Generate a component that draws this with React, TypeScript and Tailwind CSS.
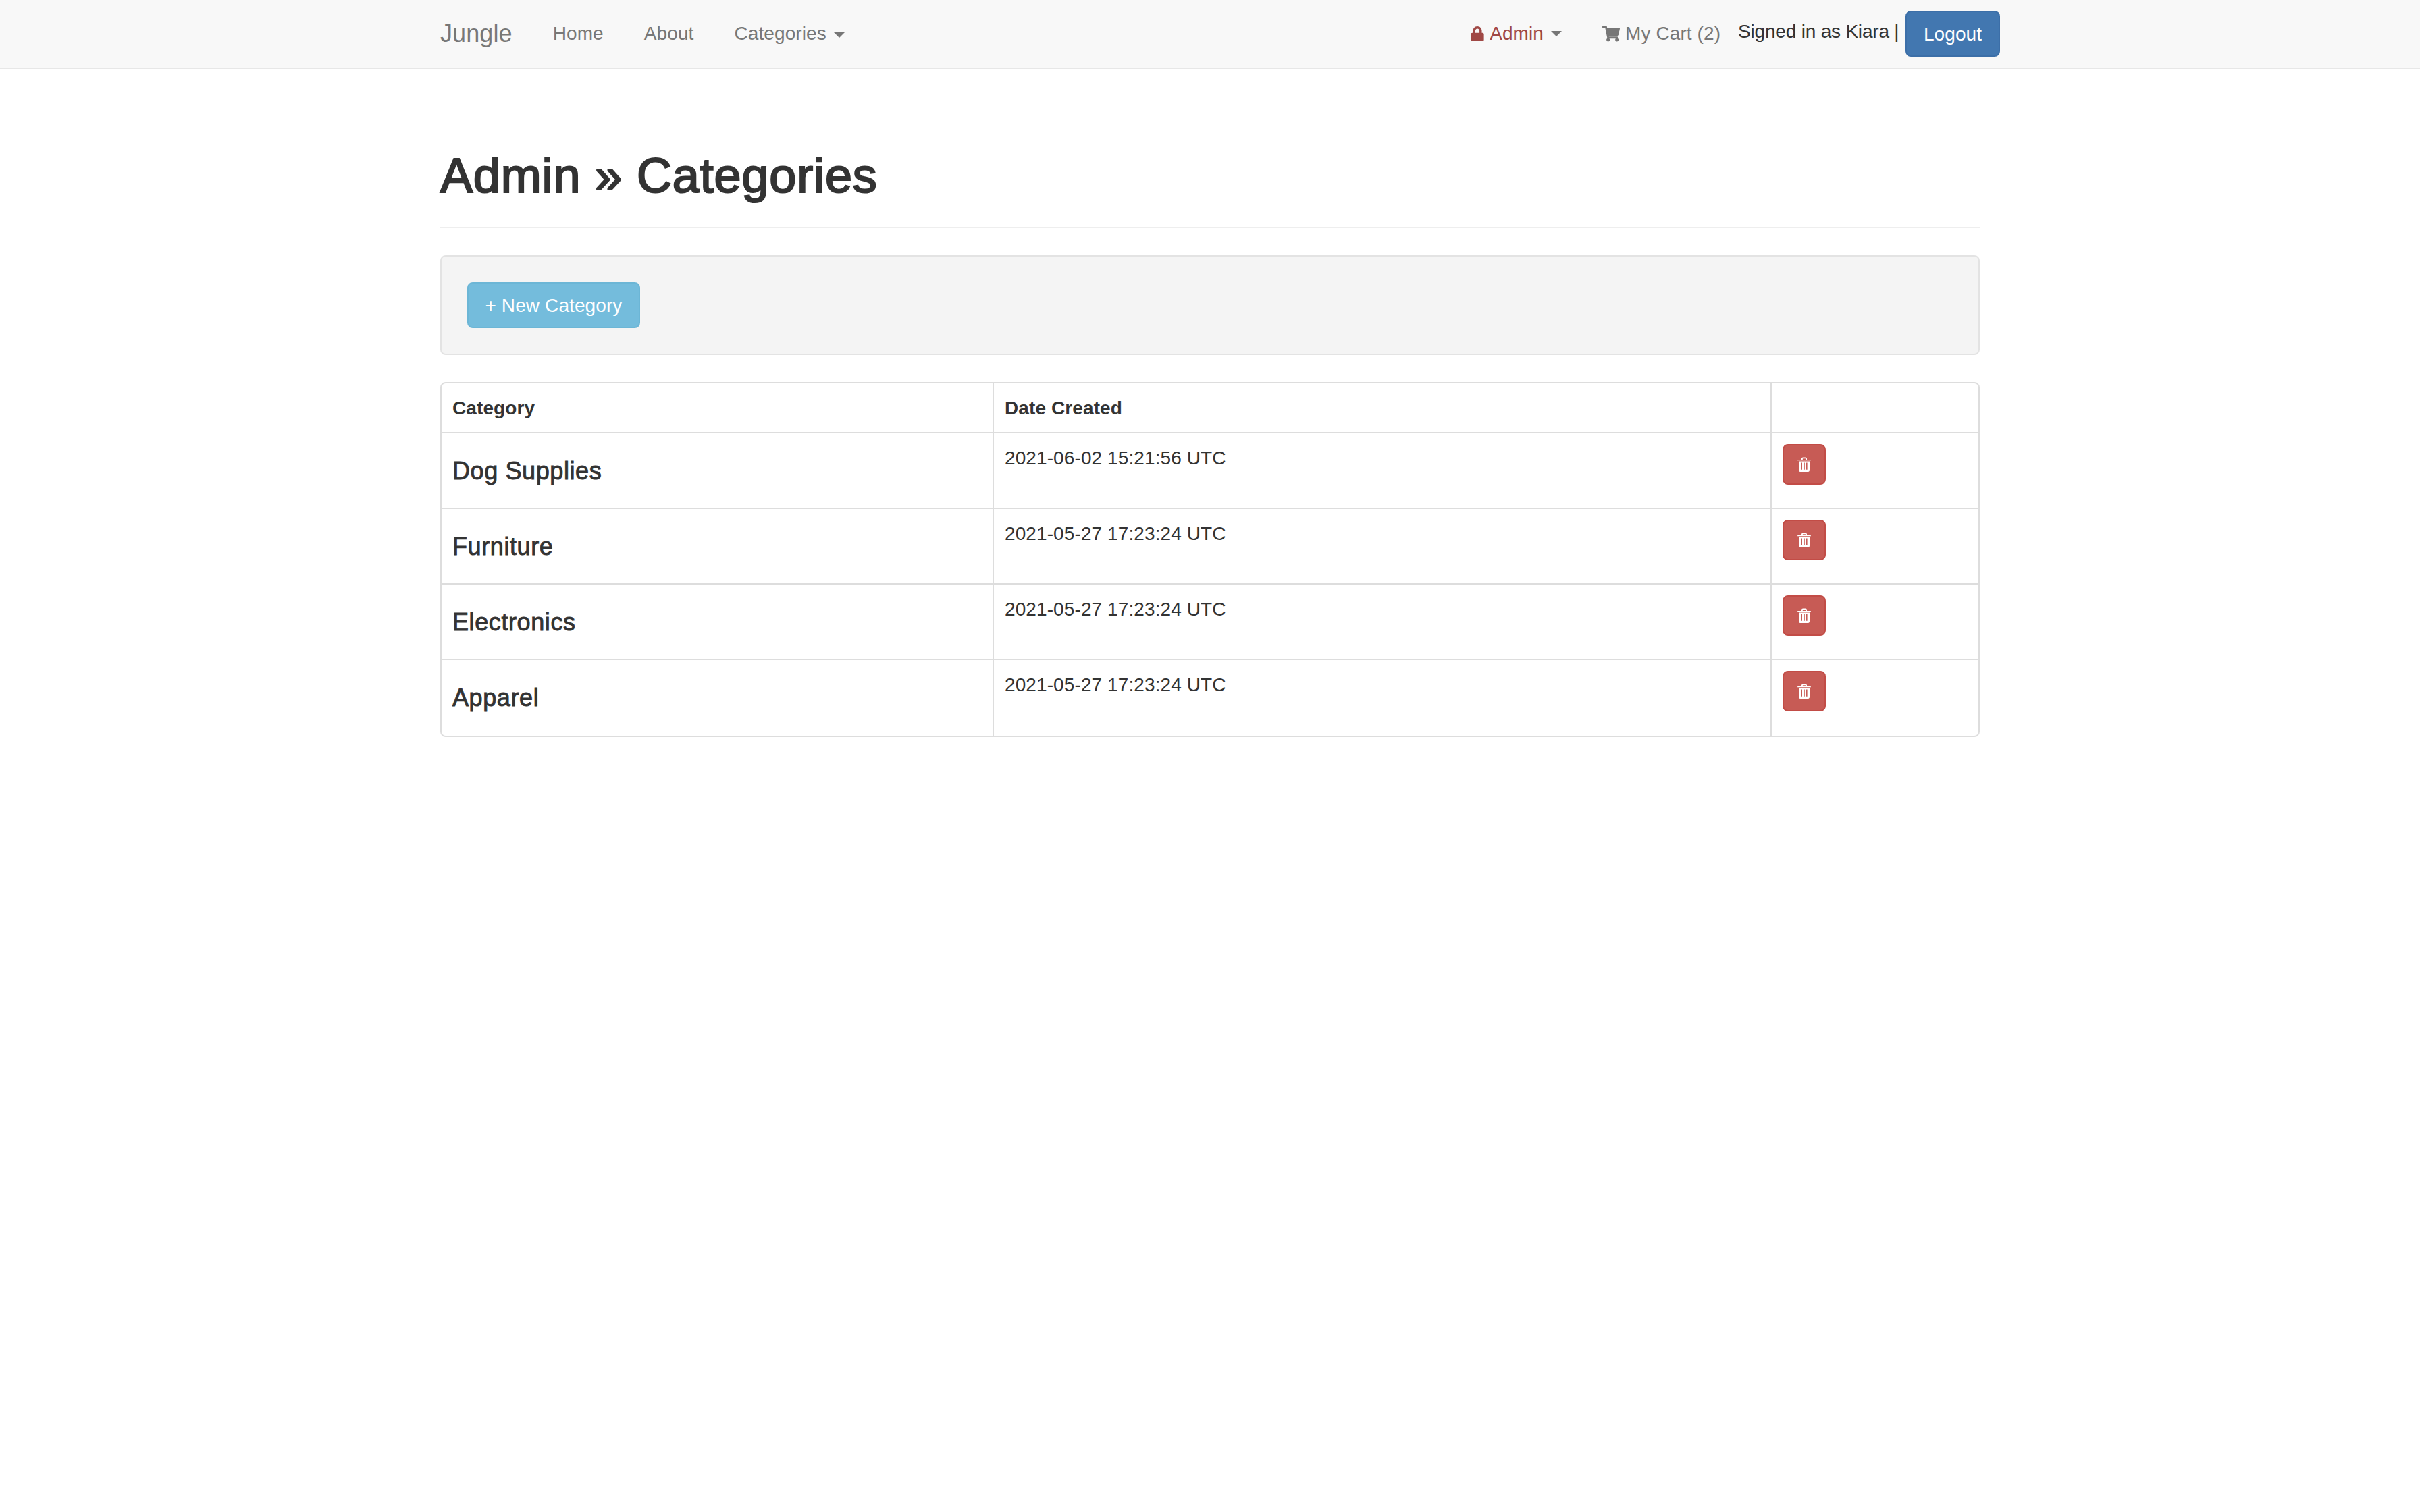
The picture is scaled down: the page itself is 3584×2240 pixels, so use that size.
import { FaLock, FaShoppingCart } from "react-icons/fa";

const categories = [
  { name: "Dog Supplies", created: "2021-06-02 15:21:56 UTC" },
  { name: "Furniture", created: "2021-05-27 17:23:24 UTC" },
  { name: "Electronics", created: "2021-05-27 17:23:24 UTC" },
  { name: "Apparel", created: "2021-05-27 17:23:24 UTC" },
];

const Caret = () => (
  <span className="ml-[11px] inline-block h-0 w-0 border-x-8 border-t-8 border-x-transparent border-t-[#777] align-middle" />
);

const TrashIcon = () => (
  <svg width="20" height="22" viewBox="0 0 20 22" fill="#fff">
    <path d="M6 4V2.6C6 1.2 7 .4 8.2.4h3.6C13 .4 14 1.2 14 2.6V4h5.2c.4 0 .8.3.8.7v.6H0v-.6c0-.4.4-.7.8-.7H6zm1.8 0h4.4V2.8c0-.4-.2-.6-.6-.6H8.400c-.4 0-.6.2-.6.6V4z" />
    <path
      fillRule="evenodd"
      d="M2 6.400h16v13.200c0 1.300-.9 2.400-2 2.400H4c-1.100 0-2-1.100-2-2.400V6.400zM5.400 8.600v10.200h1.600V8.600H5.400zm3.800 0v10.200h1.600V8.600H9.200zm3.800 0v10.200h1.600V8.600H13z"
    />
  </svg>
);

export default function App() {
  return (
    <div className="min-h-[2240px] bg-white font-['Liberation_Sans',Arial,sans-serif] text-[28px] leading-[40px] tracking-[0.1px] text-[#333]">
      <nav className="h-[102px] border-b-2 border-[#e7e7e7] bg-[#f8f8f8]">
        <div className="mx-auto flex h-[100px] w-[2340px] items-center pl-[30px] text-[#777]">
          <a className="pr-[30px] text-[36px] leading-[40px]">Jungle</a>
          <a className="px-[30px]">Home</a>
          <a className="px-[30px]">About</a>
          <a className="px-[30px]">
            Categories
            <Caret />
          </a>
          <div className="ml-auto flex items-center">
            <a className="flex items-center px-[30px] text-[#a04845]">
              <FaLock className="mr-[7px] size-[22px]" />
              Admin
              <Caret />
            </a>
            <a className="flex items-center pr-[26px] pl-[30px]">
              <FaShoppingCart className="mr-[8px] size-[26px]" />
              My Cart (2)
            </a>
            <span className="mb-[6px] tracking-[-0.2px] whitespace-pre text-[#333]">Signed in as Kiara | </span>
            <button className="ml-[2px] h-[68px] w-[140px] rounded-lg border-2 border-[#3c6fa8] bg-[#4277b0] pt-[2px] text-white">
              Logout
            </button>
          </div>
        </div>
      </nav>

      <main className="mx-auto w-[2340px] px-[30px]">
        <h1 className="mb-[40px] border-b-2 border-[#eee] pt-[119px] pb-[36px] text-[72px] leading-[79px] tracking-[0.85px] [-webkit-text-stroke:2.2px_#333]">
          Admin » Categories
        </h1>

        <div className="mb-[40px] rounded-lg border-2 border-[#e3e3e3] bg-[#f4f4f4] p-[38px]">
          <button className="h-[68px] w-[256px] rounded-lg border-2 border-[#6cb6d6] bg-[#74bcdc] pt-[2px] text-white">
            + New Category
          </button>
        </div>

        <div className="overflow-hidden rounded-lg border-2 border-[#ddd]">
          <table className="w-full table-fixed border-separate border-spacing-0">
            <colgroup>
              <col className="w-[818px]" />
              <col className="w-[1152px]" />
              <col />
            </colgroup>
            <thead>
              <tr>
                <th className="h-[74px] border-r-2 border-b-2 border-[#ddd] px-[16px] pt-[17px] text-left align-top font-bold">Category</th>
                <th className="h-[74px] border-r-2 border-b-2 border-[#ddd] px-[16px] pt-[17px] text-left align-top font-bold">Date Created</th>
                <th className="h-[74px] border-b-2 border-[#ddd]" />
              </tr>
            </thead>
            <tbody>
              {categories.map((category, index) => {
                const rowBorder = index < categories.length - 1 ? "border-b-2" : "";
                return (
                  <tr key={category.name}>
                    <td className={`h-[112px] border-r-2 border-[#ddd] px-[16px] py-[16px] align-top ${rowBorder}`}>
                      <h4 className="mt-[20px] mb-[18px] text-[36px] leading-[40px] tracking-[0.6px] [-webkit-text-stroke:0.9px_#333]">{category.name}</h4>
                    </td>
                    <td className={`h-[112px] border-r-2 border-[#ddd] px-[16px] pt-[17px] pb-[15px] align-top ${rowBorder}`}>{category.created}</td>
                    <td className={`h-[112px] border-[#ddd] px-[16px] py-[16px] align-top ${rowBorder}`}>
                      <button className="flex h-[60px] w-[64px] items-center justify-center rounded-lg border-2 border-[#c24c46] bg-[#c75b55]">
                        <TrashIcon />
                      </button>
                    </td>
                  </tr>
                );
              })}
            </tbody>
          </table>
        </div>
      </main>
    </div>
  );
}
